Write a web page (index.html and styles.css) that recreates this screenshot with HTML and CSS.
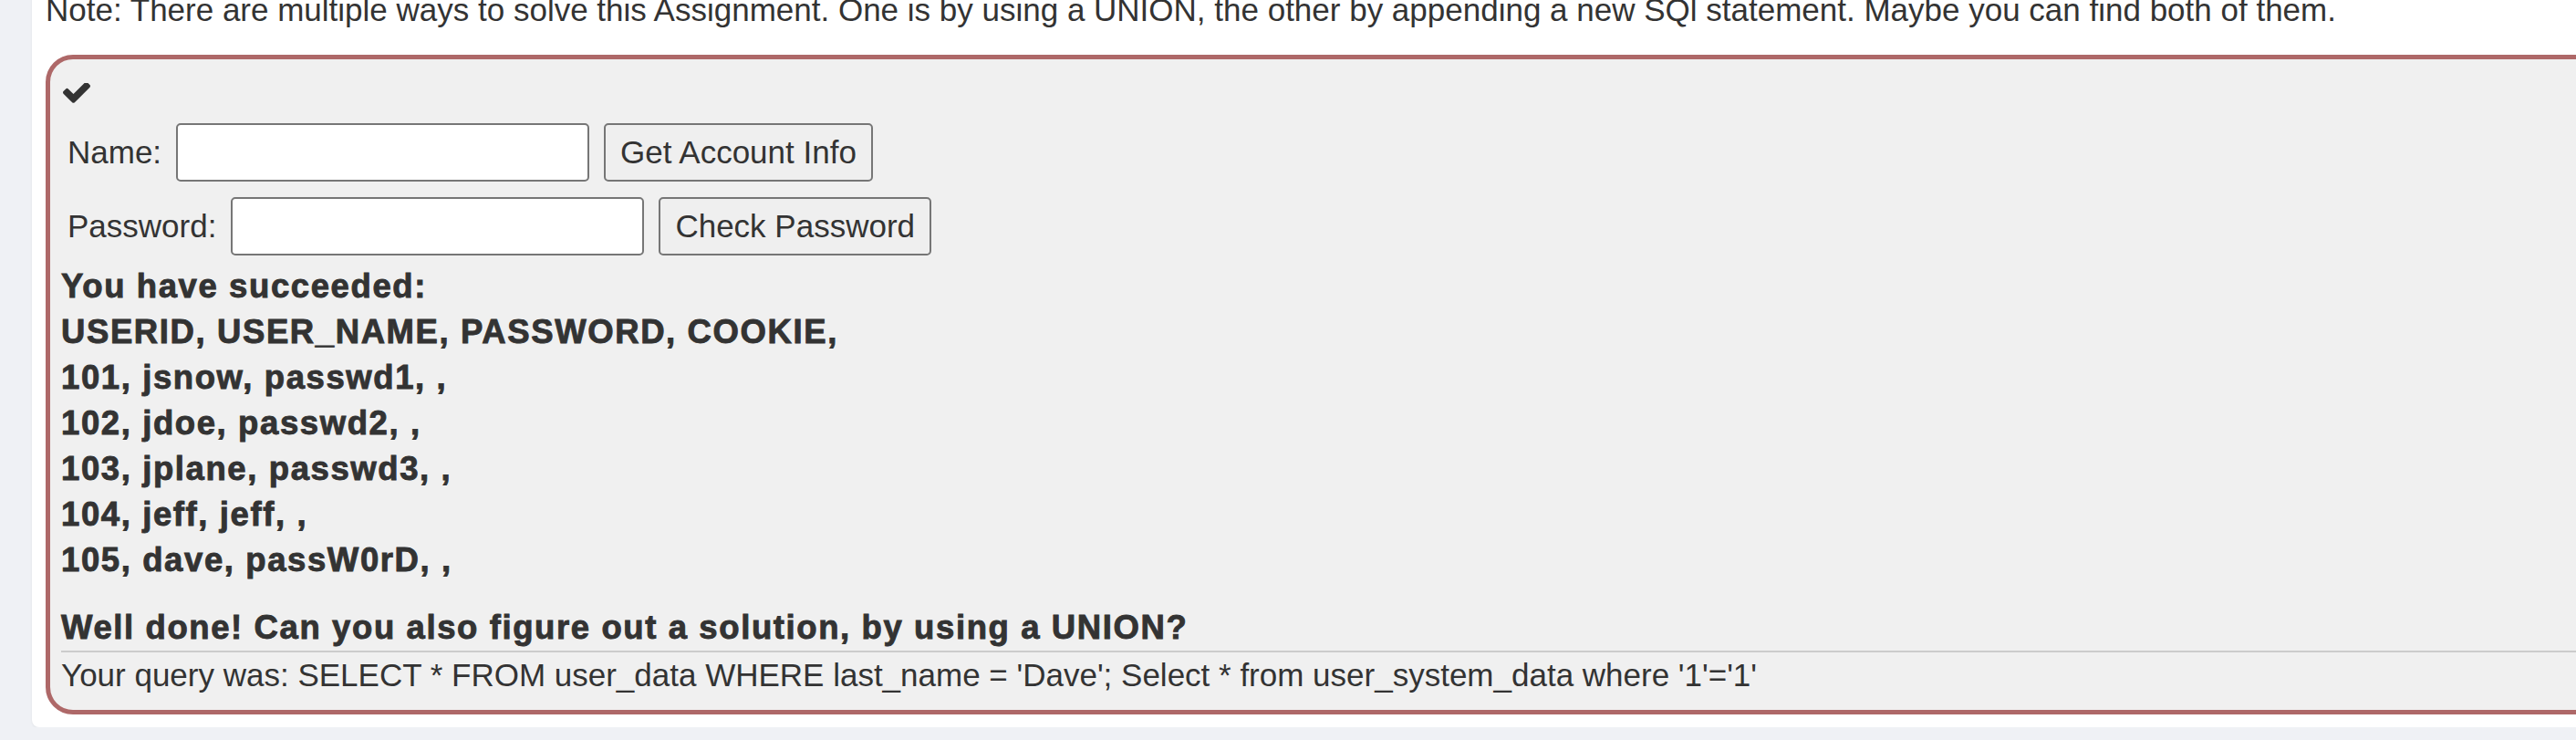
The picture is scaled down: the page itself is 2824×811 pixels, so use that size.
FILE: index.html
```html
<!DOCTYPE html>
<html lang="en">
<head>
<meta charset="utf-8">
<title>SQL Injection</title>
<link rel="stylesheet" href="styles.css">
</head>
<body>
<div class="page">
  <div class="card">
    <p class="note">Note: There are multiple ways to solve this Assignment. One is by using a UNION, the other by appending a new SQl statement. Maybe you can find both of them.</p>
    <div class="attack">
      <div class="status">
        <svg class="check" viewBox="121 402 1550 1120" width="30" height="22" aria-hidden="true"><path d="M1671 566q0 40-28 68l-724 724-136 136q-28 28-68 28t-68-28l-136-136-362-362q-28-28-28-68t28-68l136-136q28-28 68-28t68 28l294 295 656-657q28-28 68-28t68 28l136 136q28 28 28 68z"/></svg>
      </div>
      <form class="row">
        <label class="lbl">Name:</label>
        <input class="field" type="text">
        <button class="btn" type="button">Get Account Info</button>
      </form>
      <form class="row">
        <label class="lbl">Password:</label>
        <input class="field" type="text">
        <button class="btn" type="button">Check Password</button>
      </form>
      <div class="feedback">
        <p class="result">You have succeeded:<br>USERID, USER_NAME, PASSWORD, COOKIE,<br>101, jsnow, passwd1, ,<br>102, jdoe, passwd2, ,<br>103, jplane, passwd3, ,<br>104, jeff, jeff, ,<br>105, dave, passW0rD, ,</p>
        <p class="welldone">Well done! Can you also figure out a solution, by using a UNION?</p>
      </div>
      <div class="query">Your query was: SELECT * FROM user_data WHERE last_name = 'Dave'; Select * from user_system_data where '1'='1'</div>
    </div>
  </div>
</div>
</body>
</html>
```

FILE: styles.css
```css
html, body {
  margin: 0;
  padding: 0;
  overflow: hidden;
  background: #eff1f5;
}

body {
  font-family: "Liberation Sans", Arial, sans-serif;
  color: #333;
  font-size: 35px;
  line-height: 50px;
}

.page {
  padding-left: 35px;
}

.card {
  width: 2900px;
  margin-top: -14px;
  padding: 0 15px 14px;
  background: #fff;
  border-radius: 0 0 8px 8px;
  box-shadow: 0 1px 3px rgba(0, 0, 0, 0.06);
}

.note {
  margin: 0 0 24px;
}

.attack {
  border: 5px solid #ae6868;
  border-radius: 30px;
  background: #f0f0f0;
  padding: 12px 12px 13px;
}

.status {
  display: flex;
}

.check {
  display: block;
  fill: #333;
  margin: 14px 0 22px 2px;
}

.row {
  display: flex;
  align-items: center;
  height: 64px;
  margin: 0;
  padding-left: 7px;
}

.row + .row {
  margin-top: 17px;
}

.lbl {
  margin-right: 16px;
}

.field {
  box-sizing: border-box;
  width: 453px;
  height: 64px;
  margin: 0 16px 0 0;
  border: 2px solid #767676;
  border-radius: 5px;
  background: #fff;
  font: inherit;
  padding: 0 6px;
}

.btn {
  box-sizing: border-box;
  height: 64px;
  margin: 0;
  padding: 0 16px;
  border: 2px solid #767676;
  border-radius: 5px;
  background: #efefef;
  color: #333;
  font-family: "Liberation Sans", Arial, sans-serif;
  font-size: 35px;
}

.feedback {
  margin-top: 9px;
}

.result,
.welldone {
  margin: 0;
  font-weight: bold;
  font-size: 36.5px;
  letter-spacing: 1.6px;
  line-height: 50px;
  -webkit-text-stroke: 0.9px #333;
}

.result {
  margin-bottom: 24px;
}

.query {
  border-top: 2px solid #cccccc;
  white-space: nowrap;
}
```
